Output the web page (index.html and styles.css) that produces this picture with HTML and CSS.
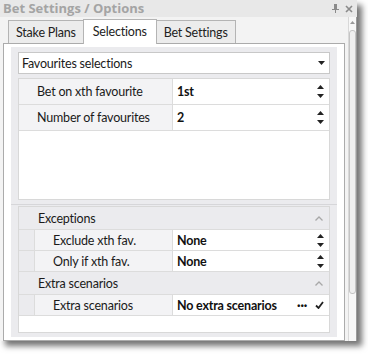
FILE: index.html
```html
<!DOCTYPE html>
<html>
<head>
<meta charset="utf-8">
<link rel="stylesheet" href="styles.css">
</head>
<body>
<div class="window">
  <div class="titlebar">
    <span class="title">Bet Settings / Options</span>
    <span class="tb-icons">
      <svg class="pin" width="7" height="9" viewBox="0 0 7 9"><path d="M2 0h3v5H2z M0 5h7v1H0z M3 6h1v3H3z" fill="#8a8a8a"/></svg>
      <svg class="close" width="8" height="8" viewBox="0 0 8 8"><path d="M1 1L7 7M7 1L1 7" stroke="#8a8a8a" stroke-width="1.6"/></svg>
    </span>
  </div>
  <div class="main">
    <div class="dock">
      <div class="tabs">
        <div class="tab">Stake Plans</div>
        <div class="tab active">Selections</div>
        <div class="tab">Bet Settings</div>
      </div>
      <div class="page">
        <div class="section upper">
          <div class="combo">
            <span>Favourites selections</span>
            <svg width="7" height="4" viewBox="0 0 7 4"><path d="M0 0h7L3.5 4z" fill="#222"/></svg>
          </div>
          <div class="grid">
            <div class="row tall">
              <div class="label">Bet on xth favourite</div>
              <div class="value"><span>1st</span>
                <span class="spin"><svg width="7" height="13" viewBox="0 0 7 13"><path d="M3.5 0L7 4H0z M0 9h7L3.5 13z" fill="#222"/></svg></span>
              </div>
            </div>
            <div class="row tall">
              <div class="label">Number of favourites</div>
              <div class="value"><span>2</span>
                <span class="spin"><svg width="7" height="13" viewBox="0 0 7 13"><path d="M3.5 0L7 4H0z M0 9h7L3.5 13z" fill="#222"/></svg></span>
              </div>
            </div>
          </div>
        </div>
        <div class="splitter"></div>
        <div class="section lower">
          <div class="grid">
            <div class="cat">
              <span>Exceptions</span>
              <svg width="8" height="5" viewBox="0 0 8 5"><path d="M0.5 4.5L4 1l3.5 3.5" stroke="#a8a8a8" stroke-width="1.3" fill="none"/></svg>
            </div>
            <div class="row child">
              <div class="indent"></div>
              <div class="label">Exclude xth fav.</div>
              <div class="value"><span>None</span>
                <span class="spin"><svg width="7" height="13" viewBox="0 0 7 13"><path d="M3.5 0L7 4H0z M0 9h7L3.5 13z" fill="#222"/></svg></span>
              </div>
            </div>
            <div class="row child">
              <div class="indent"></div>
              <div class="label">Only if xth fav.</div>
              <div class="value"><span>None</span>
                <span class="spin"><svg width="7" height="13" viewBox="0 0 7 13"><path d="M3.5 0L7 4H0z M0 9h7L3.5 13z" fill="#222"/></svg></span>
              </div>
            </div>
            <div class="cat">
              <span>Extra scenarios</span>
              <svg width="8" height="5" viewBox="0 0 8 5"><path d="M0.5 4.5L4 1l3.5 3.5" stroke="#a8a8a8" stroke-width="1.3" fill="none"/></svg>
            </div>
            <div class="row child">
              <div class="indent"></div>
              <div class="label">Extra scenarios</div>
              <div class="value"><span>No extra scenarios</span>
                <span class="btns"><span class="dots">···</span>
                  <svg width="9" height="8" viewBox="0 0 9 8"><path d="M1 4.5L3.5 7L8 1" stroke="#222" stroke-width="1.8" fill="none"/></svg>
                </span>
              </div>
            </div>
          </div>
        </div>
      </div>
    </div>
    <div class="vscroll">
      <svg width="5" height="3" viewBox="0 0 5 3"><path d="M2.5 0L5 3H0z" fill="#999"/></svg>
      <div class="thumb"></div>
    </div>
  </div>
</div>
</body>
</html>
```

FILE: styles.css
```css
html, body {
  margin: 0;
  padding: 0;
  background: #fff;
}
body {
  width: 368px;
  height: 354px;
  overflow: hidden;
  font-family: "Lato", "Open Sans", sans-serif;
  font-size: 12.5px;
  letter-spacing: -0.2px;
  color: #1a1a1a;
}
.window {
  width: 357px;
  height: 341px;
  background: #f3f3f3;
  box-shadow: 5px 5px 6px rgba(0, 0, 0, 0.55);
  display: flex;
  flex-direction: column;
}
.titlebar {
  height: 17px;
  background: #e8e8e8;
  display: flex;
  align-items: center;
  justify-content: space-between;
  padding: 0 4px 0 3px;
}
.title {
  color: #a4a4a4;
  font-family: "Open Sans", sans-serif;
  font-weight: 700;
  font-size: 13px;
  letter-spacing: 0;
  line-height: 17px;
}
.tb-icons {
  display: flex;
  align-items: center;
  gap: 6px;
}
.main {
  flex: 1;
  display: flex;
}
.dock {
  width: 343px;
  padding-left: 3px;
  display: flex;
  flex-direction: column;
}
.tabs {
  height: 26px;
  display: flex;
  align-items: flex-end;
  padding-left: 5px;
}
.tab {
  height: 22px;
  padding: 0 7px;
  border: 1px solid #b4b4b4;
  border-bottom: none;
  background: #ececec;
  font-size: 12.5px;
  line-height: 23px;
  color: #222;
  margin-right: -1px;
}
.tab.active {
  height: 24px;
  line-height: 24px;
  background: #fff;
  padding: 0 9px;
  position: relative;
  z-index: 1;
  margin-bottom: -1px;
}
.page {
  flex: 1;
  border: 1px solid #ababab;
  background: #fff;
  padding: 3px 7px 3px 7px;
  display: flex;
  flex-direction: column;
}
.section {
  background: #ebebee;
  padding: 5px 7px 4px 7px;
  display: flex;
  flex-direction: column;
}
.upper {
  height: 148px;
  padding-bottom: 0;
}
.splitter {
  height: 4px;
  background: #ebebee;
  border-bottom: 1px solid #d6d6d9;
}
.lower {
  flex: 1;
  padding-top: 1px;
}
.combo {
  height: 20px;
  background: #fff;
  border: 1px solid #c8c8c8;
  display: flex;
  align-items: center;
  justify-content: space-between;
  padding: 0 4px 0 3px;
  margin-bottom: 4px;
}
.grid {
  flex: 1;
  background: #fff;
  border: 1px solid #d8d8d8;
  display: flex;
  flex-direction: column;
}
.row {
  display: flex;
  border-bottom: 1px solid #dcdcdc;
  height: 20px;
}
.row.tall {
  height: 25px;
}
.label {
  width: 135px;
  padding-left: 18px;
  background: #f3f3f5;
  border-right: 1px solid #dcdcdc;
  display: flex;
  align-items: center;
}
.row.child .label {
  width: 119px;
}
.indent {
  width: 15px;
  background: #ebebee;
  border-right: 1px solid #dcdcdc;
}
.value {
  flex: 1;
  display: flex;
  align-items: center;
  justify-content: space-between;
  padding: 0 5px 0 4px;
  font-weight: 700;
  color: #111;
}
.spin {
  display: flex;
  align-items: center;
}
.btns {
  display: flex;
  align-items: center;
  gap: 8px;
}
.dots {
  font-weight: 900;
}
.cat {
  height: 22px;
  background: #ebebee;
  border-bottom: 1px solid #dcdcdc;
  display: flex;
  align-items: center;
  justify-content: space-between;
  padding: 0 6px 0 19px;
}
.vscroll {
  width: 7px;
  margin-left: 3px;
  border-left: 1px solid #d8d8d8;
  border-right: 1px solid #9a9a9a;
  background: #f7f7f7;
  display: flex;
  flex-direction: column;
  align-items: center;
  padding-top: 4px;
  gap: 6px;
}
.thumb {
  width: 5px;
  height: 262px;
  border: 1px solid #c4c4c4;
  border-radius: 3px;
  background: #efefef;
}
```
